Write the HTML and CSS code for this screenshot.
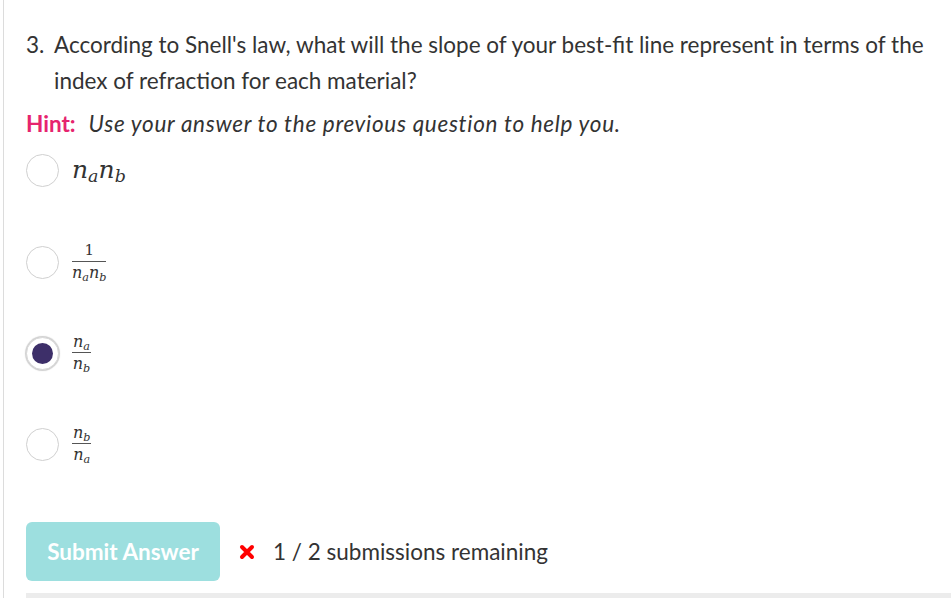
FILE: index.html
```html
<!DOCTYPE html>
<html>
<head>
<meta charset="utf-8">
<link rel="stylesheet" href="styles.css">
</head>
<body>
<div class="page">
  <div class="question">
    <span class="qnum">3.</span>
    <p class="qtext">According to Snell's law, what will the slope of your best-fit line represent in terms of the index of refraction for each material?</p>
  </div>
  <p class="hint"><span class="hint-label">Hint:</span><em>Use your answer to the previous question to help you.</em></p>

  <div class="options">
    <div class="option opt1">
      <span class="radio"></span>
      <span class="math big"><i>n</i><sub><i>a</i></sub><i>n</i><sub><i>b</i></sub></span>
    </div>
    <div class="option">
      <span class="radio"></span>
      <span class="math frac">
        <span class="num up">1</span>
        <span class="den"><i>n</i><sub><i>a</i></sub><i>n</i><sub><i>b</i></sub></span>
      </span>
    </div>
    <div class="option">
      <span class="radio checked"></span>
      <span class="math frac">
        <span class="num"><i>n</i><sub><i>a</i></sub></span>
        <span class="den"><i>n</i><sub><i>b</i></sub></span>
      </span>
    </div>
    <div class="option">
      <span class="radio"></span>
      <span class="math frac">
        <span class="num"><i>n</i><sub><i>b</i></sub></span>
        <span class="den"><i>n</i><sub><i>a</i></sub></span>
      </span>
    </div>
  </div>

  <div class="actions">
    <button class="submit">Submit Answer</button>
    <span class="status"><svg class="cross" width="16" height="16" viewBox="0 0 16 16"><path d="M3 3 L13 13 M13 3 L3 13" stroke="#f00" stroke-width="4" stroke-linecap="round"/></svg>1 / 2 submissions remaining</span>
  </div>
  <div class="footer-bar"></div>
</div>
</body>
</html>
```

FILE: styles.css
```css
html, body {
  margin: 0;
  padding: 0;
  background: #fff;
}
body {
  font-family: Lato, "Liberation Sans", sans-serif;
  color: #333;
  height: 598px;
  overflow: hidden;
}
.page {
  margin-left: 3px;
  border-left: 1px solid #dcdcdc;
  padding: 27px 0 0 22px;
  height: 571px;
}
.question {
  display: flex;
  font-size: 22.5px;
  line-height: 36px;
}
.qnum {
  width: 28px;
  flex: none;
}
.qtext {
  margin: 0;
  width: 885px;
}
.hint {
  margin: 7px 0 0;
  font-size: 22.5px;
  line-height: 36px;
}
.hint-label {
  color: #e6246e;
  font-weight: bold;
  margin-right: 13px;
}
.hint em {
  font-style: italic;
  letter-spacing: 0.7px;
}
.options {
  display: flex;
  flex-direction: column;
}
.option {
  display: flex;
  align-items: center;
  height: 91px;
  gap: 13px;
}
.opt1 {
  height: 56px;
  margin-bottom: 19px;
}
.radio {
  flex: none;
  width: 31px;
  height: 31px;
  border: 1px solid #d0d0d0;
  border-radius: 50%;
  box-sizing: content-box;
  display: flex;
  align-items: center;
  justify-content: center;
  background: #fff;
}
.radio.checked {
  box-shadow: 0 0 1px 1px #cfcfcf;
  border-color: #d8d8d8;
}
.radio.checked::after {
  content: "";
  width: 21px;
  height: 21px;
  border-radius: 50%;
  background: #3d2f69;
}
.math {
  font-family: "DejaVu Serif", "Liberation Serif", serif;
  color: #333;
}
.math i {
  font-style: italic;
}
.math sub {
  font-size: 70%;
  vertical-align: -0.25em;
  line-height: 0;
}
.big {
  font-size: 25px;
  margin-top: -2px;
}
.frac {
  display: inline-flex;
  flex-direction: column;
  align-items: center;
  font-size: 16px;
  line-height: 17px;
  margin-top: -2px;
}
.frac .num {
  border-bottom: 1px solid #555;
  padding: 0 1px 2px;
  text-align: center;
  align-self: stretch;
}
.frac .num.up {
  font-style: normal;
  font-size: 15px;
}
.frac .den {
  padding-top: 2px;
}
.actions {
  display: flex;
  align-items: center;
  margin-top: 32px;
  gap: 19px;
}
.submit {
  font-family: Lato, "Liberation Sans", sans-serif;
  font-size: 22.5px;
  font-weight: bold;
  color: #fff;
  background: #9ddfdf;
  border: none;
  border-radius: 6px;
  width: 194px;
  height: 59px;
  padding: 0;
}
.status {
  font-size: 22.5px;
  color: #333;
  display: flex;
  align-items: center;
}
.cross {
  flex: none;
  margin-right: 18px;
}
.footer-bar {
  margin-top: 12px;
  height: 8px;
  background: #ececec;
}
```
